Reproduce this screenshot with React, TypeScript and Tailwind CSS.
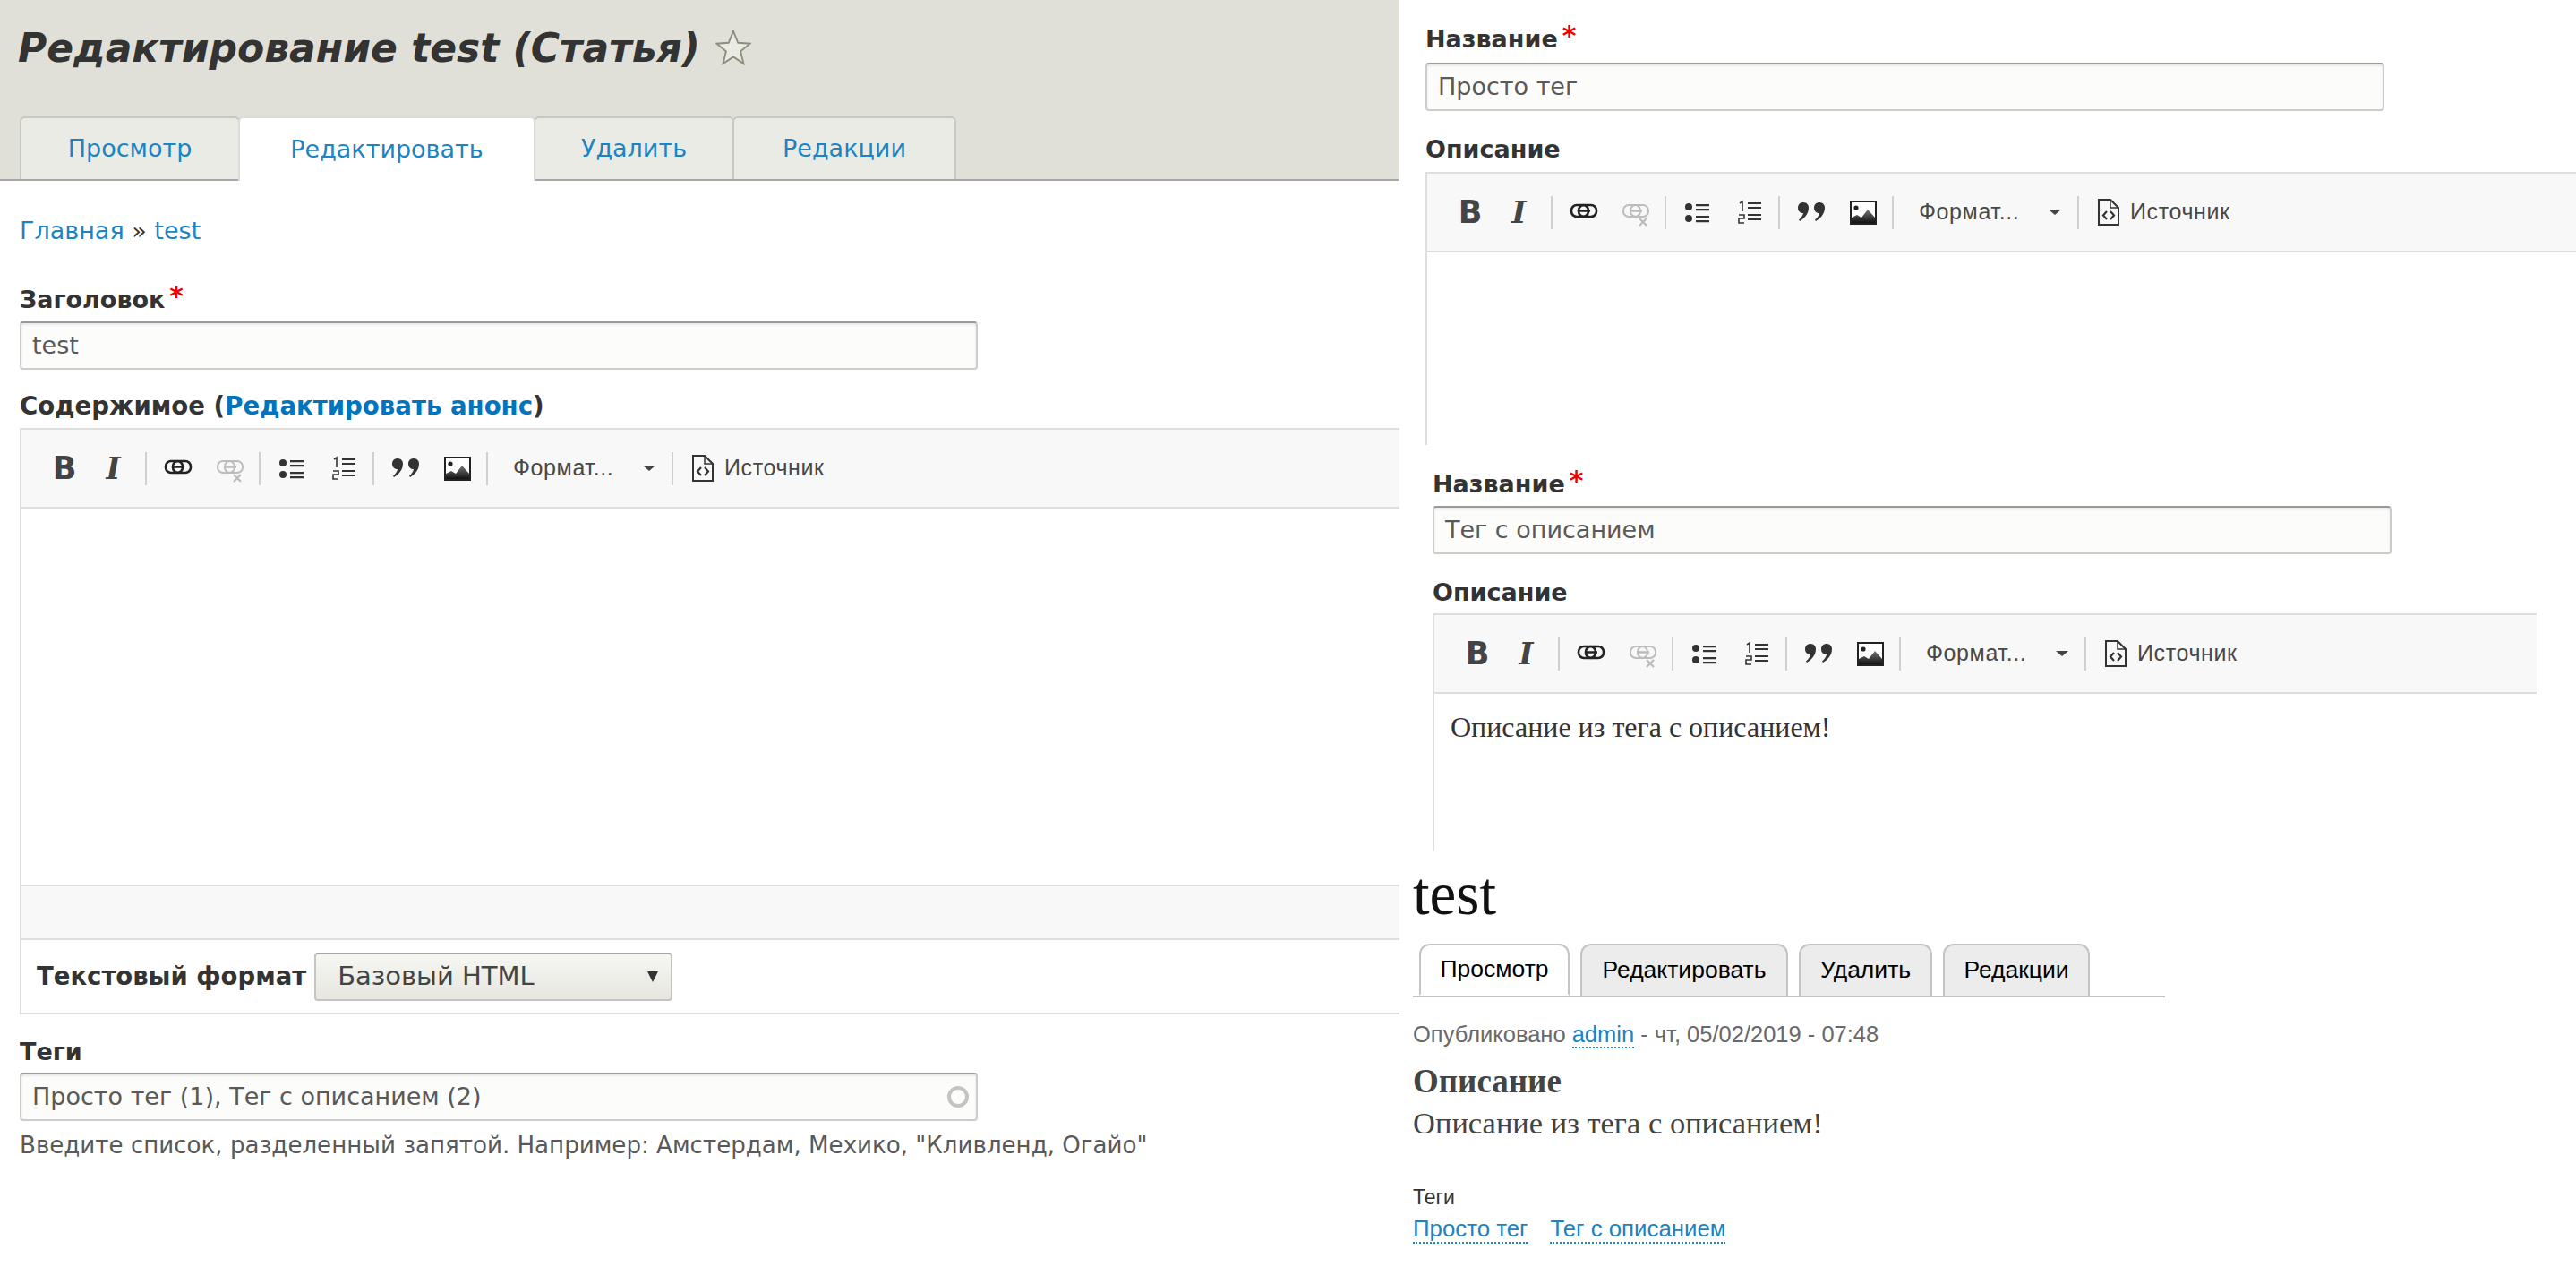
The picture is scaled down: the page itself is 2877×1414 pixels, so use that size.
import type { ReactNode } from 'react';

const sans = 'font-["DejaVu_Sans",sans-serif]';

const Sep = () => <div className="w-[2px] h-[37px] bg-[#d0d0d0] shrink-0" />;

const Btn = ({ children }: { children: ReactNode }) => (
  <div className="w-[58px] h-[40px] flex items-center justify-center shrink-0">{children}</div>
);

const LinkIcon = ({ off }: { off?: boolean }) => (
  <svg width="32" height="26" viewBox="0 0 32 26" fill="none" className="mt-[5px]">
    <g stroke={off ? '#bdbdbd' : '#222'} strokeWidth={off ? 2 : 2.6}>
      <rect x="2" y="2" width="19" height="13" rx="6" />
      <rect x="10" y="2" width="20" height="13" rx="6" />
      <path d="M9 8.5h14" strokeWidth="2.5" />
    </g>
    {off && <path d="M20 17l8 8M28 17l-8 8" stroke="#bdbdbd" strokeWidth="2.4" />}
  </svg>
);

const BulletIcon = () => (
  <svg width="30" height="26" viewBox="0 0 30 26" fill="#333">
    <circle cx="5" cy="7" r="4" />
    <circle cx="5" cy="20" r="4" />
    <path d="M13 4h15v2.2H13zM13 9h15v2.2H13zM13 17h15v2.2H13zM13 22h15v2.2H13z" />
  </svg>
);

const NumberIcon = () => (
  <svg width="27" height="28" viewBox="0 0 27 28" fill="none" stroke="#333" strokeWidth="1.6">
    <path d="M2 4l3-2v11" />
    <path d="M1 17h6v4H1v5h6" />
    <path d="M11 4h15M11 9h15M11 17h15M11 22h15" strokeWidth="2.2" />
  </svg>
);

const QuoteIcon = () => (
  <svg width="32" height="24" viewBox="0 0 32 24" fill="#333">
    <path d="M7 1c4 0 6 3 6 6 0 7-5 12-10 15l-1-1.500c3-2.500 4.500-5 5-7.500C4 13 1 11 1 7s3-6 6-6z" />
    <path d="M25 1c4 0 6 3 6 6 0 7-5 12-10 15l-1-1.500c3-2.500 4.500-5 5-7.500-3 0-6-2-6-6s3-6 6-6z" />
  </svg>
);

const ImageIcon = () => (
  <svg width="30" height="27" viewBox="0 0 30 27">
    <defs>
      <linearGradient id="mt" x1="0" y1="0" x2="0" y2="1">
        <stop offset="0" stopColor="#777" />
        <stop offset="1" stopColor="#111" />
      </linearGradient>
    </defs>
    <rect x="1" y="1" width="28" height="25" fill="#fff" stroke="#222" strokeWidth="2" />
    <circle cx="7" cy="8" r="2.600" fill="#222" />
    <path d="M2 25v-6l6-3 5 3 7-9 8 9v6z" fill="url(#mt)" />
  </svg>
);

const SourceIcon = () => (
  <svg width="26" height="32" viewBox="0 0 26 32" fill="none" stroke="#333" strokeWidth="2">
    <path d="M2 2h13l9 9v19H2z" />
    <path d="M15 2v9h9" strokeWidth="1.500" />
    <path d="M11 15l-4 4.500 4 4.500M15 15l4 4.500-4 4.500" strokeWidth="2.200" />
  </svg>
);

const Toolbar = () => (
  <div className="h-[88px] bg-[#f8f8f8] border-b-2 border-[#dedede] flex items-center pl-[19px] shrink-0">
    <Btn>
      <span className='font-["DejaVu_Sans",sans-serif] font-bold text-[35px] leading-none text-[#444]'>B</span>
    </Btn>
    <Btn>
      <span className='font-["DejaVu_Serif",serif] font-bold italic text-[34px] leading-none text-[#444] -ml-[7px]'>I</span>
    </Btn>
    <div className="w-[3px]" />
    <Sep />
    <div className="w-[6px]" />
    <Btn>
      <LinkIcon />
    </Btn>
    <Btn>
      <LinkIcon off />
    </Btn>
    <div className="w-[3px]" />
    <Sep />
    <div className="w-[6px]" />
    <Btn>
      <BulletIcon />
    </Btn>
    <Btn>
      <NumberIcon />
    </Btn>
    <div className="w-[3px]" />
    <Sep />
    <div className="w-[6px]" />
    <Btn>
      <QuoteIcon />
    </Btn>
    <Btn>
      <ImageIcon />
    </Btn>
    <div className="w-[3px]" />
    <Sep />
    <div className='w-[205px] pl-[28px] flex items-center justify-between pr-[18px] font-["Liberation_Sans",sans-serif] text-[25px] tracking-[0.6px] text-[#484848]'>
      <span>Формат...</span>
      <span className="w-0 h-0 border-x-[7px] border-x-transparent border-t-[6px] border-t-[#444]" />
    </div>
    <Sep />
    <div className='pl-[20px] flex items-center gap-[11px] font-["Liberation_Sans",sans-serif] text-[25px] tracking-[0.6px] text-[#484848]'>
      <SourceIcon />
      <span>Источник</span>
    </div>
  </div>
);

const Label = ({ children, required, className }: { children: ReactNode; required?: boolean; className?: string }) => (
  <div className={`${sans} font-bold text-[27px] leading-[30px] text-[#333] whitespace-nowrap ${className ?? ''}`}>
    {children}
    {required && <span className="text-[#ee0000] text-[30px] leading-none ml-[5px] relative top-[-3px]">*</span>}
  </div>
);

const Input = ({ value, className, children }: { value: string; className?: string; children?: ReactNode }) => (
  <div
    className={`${sans} h-[54px] flex items-center justify-between px-[12px] bg-[#fcfcfa] border-2 border-[#ccc] border-t-[#999] rounded-[4px] text-[27px] text-[#595959] shadow-[inset_0_2px_3px_rgba(0,0,0,0.08)] ${className ?? ''}`}
  >
    <span>{value}</span>
    {children}
  </div>
);

const Tab = ({ name, active, w }: { name: string; active?: boolean; w: string }) => (
  <div
    className={`${w} h-[70px] mt-[2px] flex items-center justify-center text-[27px] text-[#1a84c4] border-2 border-b-0 border-[#c8c8c2] rounded-t-[6px] -mr-[2px] ${
      active ? 'bg-white relative z-10 mb-[-2px] h-[72px] border-[#dcdcd6]' : 'bg-[#ebebe5]'
    }`}
  >
    {name}
  </div>
);

const LeftPanel = () => (
  <div className={`${sans} w-[1563px] h-[1414px] shrink-0 overflow-hidden bg-white`}>
    <div className="h-[202px] bg-[#e0e0d8] border-b-2 border-[#a6a7a2] flex flex-col">
      <div className="h-[128px] pl-[20px] pt-[26px] flex items-start gap-[17px]">
        <h1 className="font-bold italic text-[44px] leading-[56px] text-[#333] whitespace-nowrap">Редактирование test (Статья)</h1>
        <svg width="40" height="40" viewBox="0 0 42 42" fill="#ebebe5" stroke="#8d8d7e" strokeWidth="2" className="mt-[7px]">
          <path d="M21 2l5.500 13.500 14 1-11 9 3.500 14.500L21 32l-12 8 3.500-14.500-11-9 14-1z" />
        </svg>
      </div>
      <div className="flex pl-[22px]">
        <Tab name="Просмотр" w="w-[246px]" />
        <Tab name="Редактировать" w="w-[332px]" active />
        <Tab name="Удалить" w="w-[224px]" />
        <Tab name="Редакции" w="w-[250px]" />
      </div>
    </div>

    <div className="pl-[22px] pt-[41px]">
      <div className="text-[27px] leading-[30px] text-[#333]">
        <span className="text-[#1a84c4]">Главная</span> » <span className="text-[#1a84c4]">test</span>
      </div>
      <Label required className="mt-[46px]">
        Заголовок
      </Label>
      <Input value="test" className="w-[1070px] mt-[9px]" />
      <Label className="mt-[26px]">
        <span className="text-[27.600px]">
          Содержимое (<span className="text-[#0074bd]">Редактировать анонс</span>)
        </span>
      </Label>
      <div className="mt-[9px] h-[655px] border-2 border-r-0 border-[#dedede] flex flex-col">
        <Toolbar />
        <div className="h-[422px] shrink-0 border-b-2 border-[#dedede]" />
        <div className="h-[60px] shrink-0 bg-[#f8f8f8] border-b-2 border-[#dedede]" />
        <div className="flex-1 flex items-center pl-[17px] gap-[9px]">
          <span className="font-bold text-[27.500px] text-[#333] whitespace-nowrap">Текстовый формат</span>
          <div className="w-[400px] h-[54px] flex items-center justify-between pl-[24px] pr-[14px] bg-gradient-to-b from-[#f6f6f3] to-[#e7e7df] border-2 border-[#c4c4c0] border-t-[#a6a6a6] rounded-[4px] text-[29px] text-[#444]">
            <span>Базовый HTML</span>
            <span className="w-0 h-0 border-x-[6px] border-x-transparent border-t-[12px] border-t-[#333]" />
          </div>
        </div>
      </div>
      <Label className="mt-[27px]">Теги</Label>
      <Input value="Просто тег (1), Тег с описанием (2)" className="w-[1070px] mt-[8px]">
        <span className="w-[24px] h-[24px] rounded-full border-[4px] border-[#c4c4c4] mr-[-4px]" />
      </Input>
      <p className="mt-[12px] text-[26.100px] leading-[30px] text-[#595959] whitespace-nowrap">
        Введите список, разделенный запятой. Например: Амстердам, Мехико, "Кливленд, Огайо"
      </p>
    </div>
  </div>
);

const TermForm = ({ name, body, className, inputGap, editorGap }: { name: string; body?: string; className: string; inputGap: string; editorGap: string }) => (
  <div className={`${sans} ${className} bg-white overflow-hidden`}>
    <Label required>Название</Label>
    <Input value={name} className={`w-[1071px] ${inputGap}`} />
    <Label className="mt-[28px]">Описание</Label>
    <div className={`${editorGap} h-[320px] border-t-2 border-l-2 border-[#dedede]`}>
      <Toolbar />
      {body && <p className='pl-[18px] pt-[19px] font-["Liberation_Serif",serif] text-[32px] leading-[36px] text-[#333]'>{body}</p>}
    </div>
  </div>
);

const ViewTab = ({ name, active, w }: { name: string; active?: boolean; w: string }) => (
  <div
    className={`${w} h-[58px] flex items-center justify-center text-[26.500px] text-black border-2 border-[#c4c4c4] rounded-t-[12px] ${
      active ? 'bg-white border-b-white relative z-10 mb-[-2px]' : 'bg-[#ececec] border-b-0'
    }`}
  >
    {name}
  </div>
);

const NodeView = () => (
  <div className='h-[464px] bg-white pl-[15px] pt-[18px] font-["Liberation_Sans",sans-serif]'>
    <h2 className='font-["Liberation_Serif",serif] text-[67px] leading-[60px] text-[#111]'>test</h2>
    <div className="w-[840px] mt-[26px] border-b-2 border-[#c4c4c4] flex gap-[12px] pl-[7px]">
      <ViewTab name="Просмотр" w="w-[168px]" active />
      <ViewTab name="Редактировать" w="w-[232px]" />
      <ViewTab name="Удалить" w="w-[149px]" />
      <ViewTab name="Редакции" w="w-[164px]" />
    </div>
    <div className="mt-[26px] text-[25.500px] leading-[30px] text-[#68696b]">
      Опубликовано <span className="text-[#1a84c4] border-b-2 border-dotted border-[#1a84c4]">admin</span> - чт, 05/02/2019 - 07:48
    </div>
    <div className='mt-[18px] font-["Liberation_Serif",serif] font-bold text-[37px] leading-[40px] text-[#444]'>Описание</div>
    <div className='mt-[6px] font-["Liberation_Serif",serif] text-[34.500px] leading-[40px] text-[#444]'>Описание из тега с описанием!</div>
    <div className="mt-[48px] text-[23px] leading-[30px] text-[#333]">Теги</div>
    <div className="mt-[5px] flex gap-[25px] text-[25.800px] leading-[30px] text-[#1a84c4]">
      <span className="border-b-2 border-dotted border-[#1a84c4]">Просто тег</span>
      <span className="border-b-2 border-dotted border-[#1a84c4]">Тег с описанием</span>
    </div>
  </div>
);

export default function App() {
  return (
    <div className="w-[2877px] h-[1414px] flex bg-white overflow-hidden">
      <LeftPanel />
      <div className="flex-1 flex flex-col min-w-0">
        <TermForm name="Просто тег" inputGap="mt-[11px]" editorGap="mt-[10px]" className="h-[497px] pl-[29px] pt-[28px]" />
        <TermForm name="Тег с описанием" inputGap="mt-[9px]" editorGap="mt-[8px]" body="Описание из тега с описанием!" className="h-[453px] pl-[37px] pt-[28px] mr-[44px]" />
        <NodeView />
      </div>
    </div>
  );
}
